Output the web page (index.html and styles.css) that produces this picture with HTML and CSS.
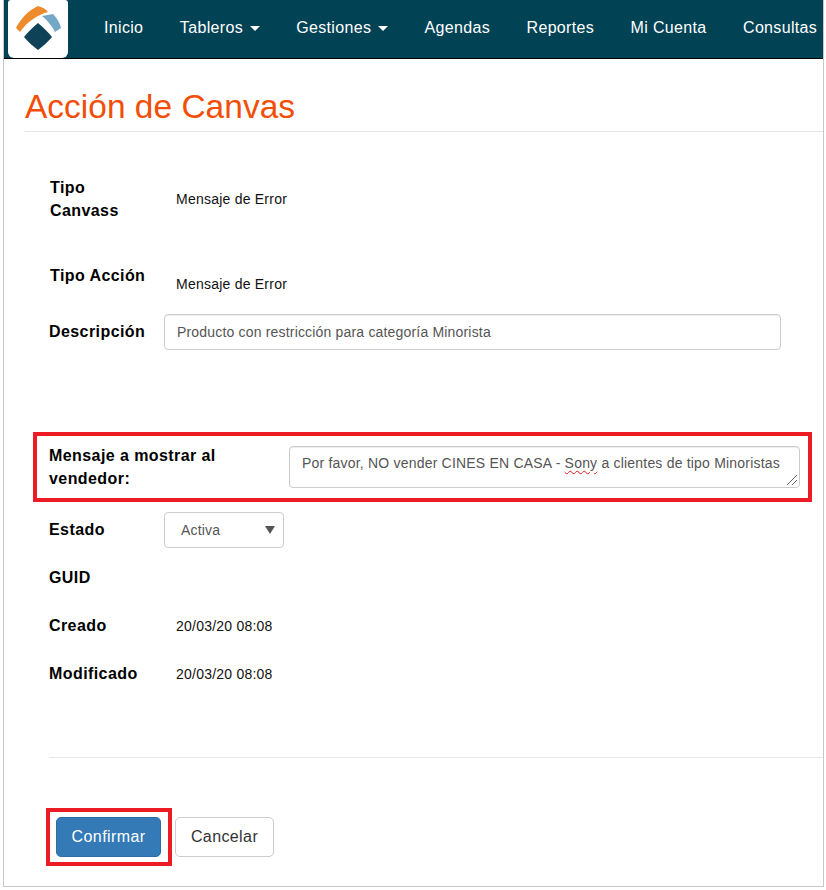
FILE: index.html
```html
<!DOCTYPE html>
<html lang="es">
<head>
<meta charset="utf-8">
<title>Acción de Canvas</title>
<link rel="stylesheet" href="styles.css">
</head>
<body>
<div class="frame">
  <nav class="navbar">
    <a class="logo" href="#">
      <svg width="60" height="58" viewBox="0 0 60 58">
        <path d="M8 28 C13 18 21 10 30 6 C34 7 38 9 40 12 C29 15 19 22 12 32 Z" fill="#ee8b2d"/>
        <path d="M34 16 L45 14 C49 18 52 23 53 28 L47 32 C44 26 39 20 34 16 Z" fill="#74a8c6"/>
        <path d="M30 23 C35 27 40 32 44 37 C40 42 35 46 30 50 C25 46 20 42 16 37 C20 32 25 27 30 23 Z" fill="#0e4257"/>
      </svg>
    </a>
    <ul class="nav-list">
      <li><a href="#">Inicio</a></li>
      <li><a href="#">Tableros <span class="caret"></span></a></li>
      <li><a href="#">Gestiones <span class="caret"></span></a></li>
      <li><a href="#">Agendas</a></li>
      <li><a href="#">Reportes</a></li>
      <li><a href="#">Mi Cuenta</a></li>
      <li><a href="#">Consultas</a></li>
    </ul>
  </nav>
  <main class="content">
    <h1 class="title">Acción de Canvas</h1>
    <form class="form">
      <div class="row row-tipo">
        <label class="label label-tipo">Tipo Canvass</label>
        <span class="value">Mensaje de Error</span>
      </div>
      <div class="row row-accion">
        <label class="label label-accion">Tipo Acción</label>
        <span class="value">Mensaje de Error</span>
      </div>
      <div class="row row-desc">
        <label class="label label-std">Descripción</label>
        <input class="control input" type="text" value="Producto con restricción para categoría Minorista">
      </div>
      <div class="row row-msg">
        <label class="label label-msg">Mensaje a mostrar al vendedor:</label>
        <div class="control textarea">Por favor, NO vender CINES EN CASA - <span class="misspelled">Sony</span> a clientes de tipo Minoristas
          <svg class="grip" width="12" height="12" viewBox="0 0 12 12"><path d="M1 11 L11 1 M6 11 L11 6" stroke="#666" stroke-width="1" fill="none"/></svg>
        </div>
      </div>
      <div class="row row-estado">
        <label class="label label-std">Estado</label>
        <div class="control select"><span>Activa</span><span class="arrow"></span></div>
      </div>
      <div class="row row-info">
        <label class="label label-std">GUID</label>
      </div>
      <div class="row row-info">
        <label class="label label-std">Creado</label>
        <span class="value value-date">20/03/20 08:08</span>
      </div>
      <div class="row row-info">
        <label class="label label-std">Modificado</label>
        <span class="value value-date">20/03/20 08:08</span>
      </div>
      <hr class="divider">
      <div class="actions">
        <div class="confirm-box"><button class="btn btn-primary" type="button">Confirmar</button></div>
        <button class="btn btn-default" type="button">Cancelar</button>
      </div>
    </form>
  </main>
</div>
</body>
</html>
```
FILE: styles.css
```css
* { box-sizing: border-box; }
html, body { margin: 0; padding: 0; background: #fff; }
body {
  padding-left: 3px;
  font-family: "Liberation Sans", Arial, sans-serif;
  color: #000;
  width: 826px;
  height: 890px;
  overflow: hidden;
}
.frame {
  width: 821px;
  height: 887px;
  border-left: 1px solid #c8c8c8;
  border-right: 1px solid #c8c8c8;
  border-bottom: 1px solid #c8c8c8;
  overflow: hidden;
}
.navbar {
  display: flex;
  height: 59px;
  background: #024255;
  border-bottom: 1px solid #000;
  padding-left: 4px;
}
.logo {
  display: block;
  flex: none;
  width: 60px;
  height: 58px;
  background: #fff;
  border-radius: 3px 3px 6px 6px;
}
.logo svg { display: block; }
.nav-list {
  display: flex;
  list-style: none;
  margin: 0 0 0 17.75px;
  padding: 0;
  white-space: nowrap;
}
.nav-list a {
  display: block;
  padding: 19px 18.25px 0;
  color: #fff;
  font-size: 16px;
  line-height: 18px;
  letter-spacing: .33px;
  text-decoration: none;
}
.caret {
  display: inline-block;
  width: 0;
  height: 0;
  margin-left: 2px;
  vertical-align: middle;
  border-top: 5px solid #fff;
  border-left: 5px solid transparent;
  border-right: 5px solid transparent;
}
.content { padding-left: 21px; }
.title {
  margin: 0;
  height: 73px;
  padding-top: 28px;
  border-bottom: 1px solid #e6e6e6;
  font-size: 33.5px;
  line-height: 40px;
  font-weight: 400;
  color: #f24e08;
}
.form { margin-left: 9px; }
.row { display: flex; }
.label {
  display: block;
  font-size: 16px;
  line-height: 23px;
  font-weight: 700;
  letter-spacing: .42px;
}
.label-std { width: 115px; margin-left: 15px; flex: none; }
.value { font-size: 14px; line-height: 20px; color: #111; letter-spacing: .23px; }
.row-tipo { height: 132px; padding-top: 44px; }
.label-tipo { width: 126px; margin-left: 16px; padding-right: 30px; flex: none; }
.row-tipo .value { margin-top: 13px; }
.row-accion { height: 47px; }
.label-accion { width: 126px; margin-left: 16px; flex: none; }
.row-accion .value { margin-top: 10px; }
.control {
  border: 1px solid #ccc;
  border-radius: 4px;
  background: #fff;
  color: #555;
  font-family: inherit;
  font-size: 14px;
  letter-spacing: .18px;
}
.input {
  width: 617px;
  height: 36px;
  padding: 6px 12px;
  box-shadow: inset 0 1px 1px rgba(0,0,0,.075);
}
.row-desc { height: 118px; margin-top: 3px; align-items: flex-start; }
.row-desc .label { margin-top: 6px; }
.row-msg {
  width: 779px;
  height: 70px;
  margin-left: -1px;
  border: 4px solid #ed1c24;
  padding: 10px 0 0 12px;
}
.label-msg { width: 240px; margin-top: -2px; flex: none; }
.textarea {
  position: relative;
  width: 511px;
  height: 42px;
  padding: 7px 12px;
  line-height: 18px;
  white-space: nowrap;
  letter-spacing: .2px;
  box-shadow: inset 0 1px 1px rgba(0,0,0,.075);
}
.misspelled {
  text-decoration: underline wavy #e01b1b 1px;
  text-underline-offset: 2px;
}
.grip { position: absolute; right: 1px; bottom: 1px; }
.row-estado { height: 48px; margin-top: 10px; }
.row-estado .label { margin-top: 6px; }
.select {
  display: flex;
  justify-content: space-between;
  align-items: center;
  width: 120px;
  height: 36px;
  padding: 0 8px 0 16px;
}
.arrow {
  width: 0;
  height: 0;
  border-top: 8px solid #555;
  border-left: 5px solid transparent;
  border-right: 5px solid transparent;
}
.row-info { height: 48px; padding-top: 6px; }
.value-date { margin-top: 2px; margin-left: 12px; }
.divider {
  margin: 53px 0 0 15px;
  border: 0;
  border-top: 1px solid #e8e8e8;
}
.actions {
  display: flex;
  align-items: flex-start;
  margin-top: 50px;
  margin-left: 12px;
}
.confirm-box {
  width: 126px;
  height: 58px;
  border: 4px solid #ed1c24;
  padding: 5px 0 0 6px;
}
.btn {
  height: 40px;
  padding: 0 14px;
  border-radius: 5px;
  font-family: inherit;
  font-size: 16px;
  line-height: 20px;
  letter-spacing: .4px;
}
.btn-primary {
  width: 105px;
  background: #337ab7;
  border: 1px solid #2e6da4;
  color: #fff;
}
.btn-default {
  width: 99px;
  margin: 9px 0 0 3px;
  background: #fff;
  border: 1px solid #ccc;
  color: #333;
}
```
